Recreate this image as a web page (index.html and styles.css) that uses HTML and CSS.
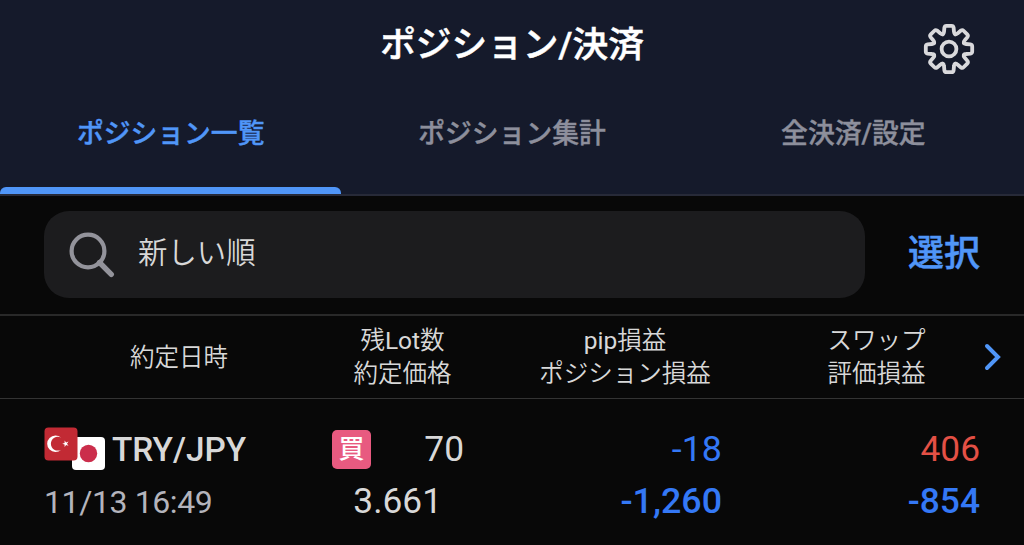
FILE: index.html
```html
<!DOCTYPE html>
<html lang="ja">
<head>
  <meta charset="UTF-8" />
  <title>ポジション/決済</title>
  <meta name="viewport" content="width=device-width, initial-scale=1.0" />
  <link rel="stylesheet" href="styles.css">
</head>
<body>

  <header class="header">
    <div class="title-bar">
      <h1>ポジション/決済</h1>
      <button class="icon-button" aria-label="設定">
        <svg class="gear" viewBox="-26 -26 52 52">
          <defs>
            <path id="tooth" d="M-6.1 -14.8Q-5.1 -15.3 -5 -17L-4.6 -21.4Q-4.3 -23.2 -2.6 -23.2H2.6Q4.3 -23.2 4.6 -21.4L5 -17Q5.1 -15.3 6.1 -14.8" />
          </defs>
          <use href="#tooth" />
          <use href="#tooth" transform="rotate(45)" />
          <use href="#tooth" transform="rotate(90)" />
          <use href="#tooth" transform="rotate(135)" />
          <use href="#tooth" transform="rotate(180)" />
          <use href="#tooth" transform="rotate(225)" />
          <use href="#tooth" transform="rotate(270)" />
          <use href="#tooth" transform="rotate(315)" />
          <circle r="7.4" />
        </svg>
      </button>
    </div>
    <nav class="tabs">
      <div class="tab active">ポジション一覧</div>
      <div class="tab">ポジション集計</div>
      <div class="tab">全決済/設定</div>
    </nav>
  </header>

  <!-- Sort / select -->
  <div class="filter">
    <div class="search">
      <svg class="search-icon" viewBox="0 0 46 46">
        <circle cx="19" cy="19" r="16.4" />
        <path d="M30.5 30.5L42.3 42.3" />
      </svg>
      <span>新しい順</span>
    </div>
    <button class="select">選択</button>
  </div>

  <!-- Column names -->
  <div class="grid columns">
    <div>約定日時</div>
    <div>残<span class="latin">Lot</span>数<br>約定価格</div>
    <div><span class="latin">pip</span>損益<br>ポジション損益</div>
    <div class="last">スワップ<br>評価損益</div>
    <svg class="chevron" viewBox="0 0 18 30"><path d="M3 4L14 15L3 26" /></svg>
  </div>

  <!-- Position -->
  <div class="grid position">
    <div class="pair">
      <div class="line">
        <svg class="flags" viewBox="0 0 62 44">
          <rect x="28" y="10" width="33" height="33" rx="4" fill="#fff" />
          <circle cx="44.5" cy="26.5" r="8.7" fill="#cb2d4b" />
          <rect x="0.5" y="0.5" width="33" height="33" rx="4" fill="#c22a34" />
          <path fill="#fff" d="M17.2 10.7A8.3 8.3 0 1 0 17.2 22.7A6.9 6.9 0 1 1 17.2 10.7Z" />
          <path fill="#fff" d="M18.2 16.7L20.6 15.9V13.4L22.1 15.4L24.5 14.6L23 16.7L24.5 18.8L22.1 18L20.6 20V17.5Z" />
        </svg>
        <strong>TRY/JPY</strong>
      </div>
      <div class="line date">11/13 16:49</div>
    </div>
    <div class="lot">
      <div class="line"><span class="badge">買</span><span>70</span></div>
      <div class="line price">3.661</div>
    </div>
    <div class="value">
      <div class="line minus">-18</div>
      <div class="line minus bold">-1,260</div>
    </div>
    <div class="value last">
      <div class="line plus">406</div>
      <div class="line minus bold">-854</div>
    </div>
  </div>

</body>
</html>
```

FILE: styles.css
```css
* {
  box-sizing: border-box;
}
body {
  font-family: Roboto, "Noto Sans CJK JP", sans-serif;
  background: #080808;
  color: #d8d8d8;
  margin: 0;
  height: 545px;
  overflow: hidden;
}
button {
  background: none;
  border: none;
  padding: 0;
  font-family: inherit;
}
.header {
  background: #151a2b;
  height: 196px;
  border-bottom: 2px solid #272a38;
  display: flex;
  flex-direction: column;
}
.title-bar {
  height: 88px;
  padding: 0 49px;
  display: grid;
  grid-template-columns: 52px 1fr 52px;
}
h1 {
  grid-column: 2;
  margin: 0;
  color: #fff;
  font-size: 35.7px;
  font-weight: 500;
  -webkit-text-stroke: 0.5px;
  line-height: 91px;
  text-align: center;
}
.icon-button {
  height: 98px;
}
.gear {
  display: block;
  width: 52px;
  height: 52px;
  fill: none;
  stroke: #d9d9dc;
  stroke-width: 3.8;
  stroke-linecap: round;
}
.tabs {
  flex: 1;
  display: grid;
  grid-template-columns: repeat(3, 1fr);
}
.tab {
  color: #8d8f9c;
  font-size: 26.8px;
  font-weight: 500;
  -webkit-text-stroke: 0.4px;
  line-height: 93px;
  text-align: center;
}
.tab.active {
  color: #5096f8;
  display: flex;
  flex-direction: column;
}
.tab.active::after {
  content: "";
  height: 7px;
  margin-top: auto;
  border-radius: 6px 6px 0 0;
  background: #5096f8;
}
.filter {
  height: 120px;
  padding: 15px 44px 17px;
  border-bottom: 2px solid #292929;
  display: flex;
  justify-content: space-between;
}
.search {
  width: 821px;
  height: 87px;
  padding-left: 25px;
  border-radius: 25px;
  background: #1c1c1e;
  display: flex;
  align-items: center;
  gap: 23px;
  font-size: 29.4px;
  font-weight: 350;
}
.search span {
  padding-bottom: 10px;
}
.search-icon {
  width: 46px;
  height: 46px;
  fill: none;
  stroke: #93939b;
  stroke-width: 4.2;
  stroke-linecap: round;
}
.search-icon path {
  stroke-width: 5.4;
}
.select {
  color: #5096f8;
  font-size: 36px;
  font-weight: 500;
  -webkit-text-stroke: 0.5px;
  line-height: 86px;
  height: 86px;
}
.grid {
  padding-left: 44px;
  display: grid;
  grid-template-columns: 270px 177px 268px 221px 24px;
}
.last {
  padding-left: 14px;
}
.columns {
  height: 83px;
  border-bottom: 1px solid #333;
  align-items: center;
  text-align: center;
  font-size: 24.5px;
  font-weight: 350;
  line-height: 33px;
}
.latin {
  font-weight: 400;
}
.chevron {
  width: 18px;
  height: 30px;
  margin-left: 4px;
  fill: none;
  stroke: #5096f8;
  stroke-width: 4;
  stroke-linecap: round;
}
.position {
  padding-top: 24px;
  font-size: 35.3px;
}
.line {
  height: 52px;
  display: flex;
  align-items: center;
}
.flags {
  width: 62px;
  height: 44px;
}
.pair strong {
  margin-left: 6px;
  font-size: 33.4px;
  font-weight: 500;
}
.date {
  color: #b4b4bc;
  font-size: 32px;
  letter-spacing: -0.4px;
  padding-top: 2px;
}
.lot .line {
  justify-content: space-between;
  padding: 0 27px 0 18px;
}
.lot .price {
  justify-content: flex-end;
  padding-right: 49px;
}
.badge {
  width: 39px;
  height: 39px;
  border-radius: 5px;
  background: #e85a80;
  color: #fff;
  font-size: 26px;
  font-weight: 500;
  line-height: 39px;
  text-align: center;
}
.value .line {
  justify-content: flex-end;
}
.value:not(.last) {
  padding-right: 37px;
  font-size: 35.8px;
}
.minus {
  color: #3478f6;
}
.plus {
  color: #e45045;
}
.bold {
  font-weight: 500;
}
```
